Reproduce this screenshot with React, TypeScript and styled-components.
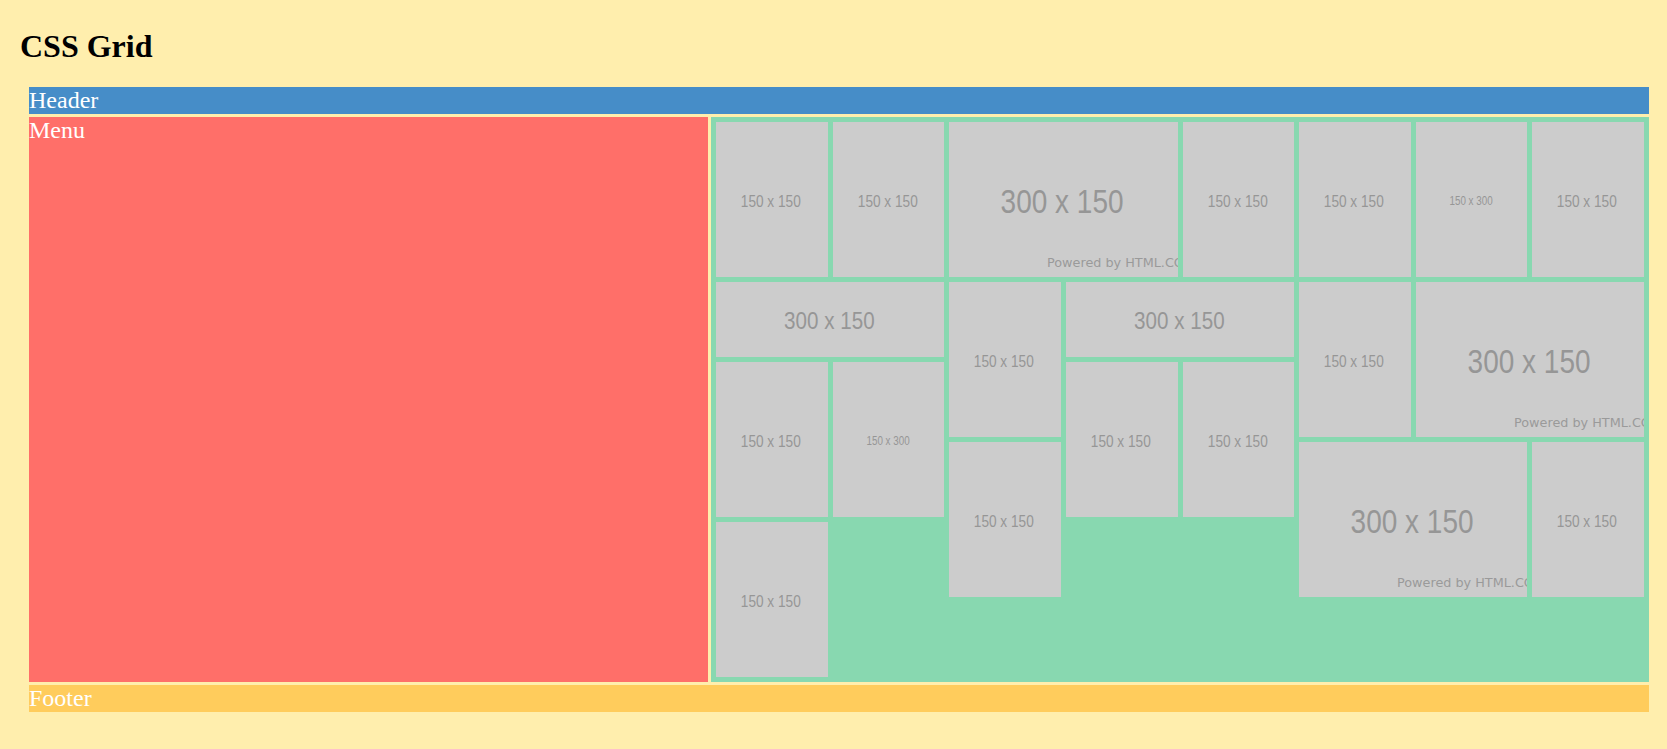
import styled, { createGlobalStyle } from 'styled-components';

const GlobalStyle = createGlobalStyle`
  html, body {
    margin: 0;
    padding: 0;
    background: #ffeead;
  }
`;

type Shot = {
  w: number;
  h: number;
  col: number;
  row: number;
  cols: number;
  rows: number;
};

// placeholder pictures, placed on the 8 column content grid
const shots: Shot[] = [
  { w: 150, h: 150, col: 1, row: 1, cols: 1, rows: 2 },
  { w: 150, h: 150, col: 2, row: 1, cols: 1, rows: 2 },
  { w: 300, h: 150, col: 3, row: 1, cols: 2, rows: 2 },
  { w: 150, h: 150, col: 5, row: 1, cols: 1, rows: 2 },
  { w: 150, h: 150, col: 6, row: 1, cols: 1, rows: 2 },
  { w: 150, h: 300, col: 7, row: 1, cols: 1, rows: 2 },
  { w: 150, h: 150, col: 8, row: 1, cols: 1, rows: 2 },
  { w: 300, h: 150, col: 1, row: 3, cols: 2, rows: 1 },
  { w: 150, h: 150, col: 3, row: 3, cols: 1, rows: 2 },
  { w: 300, h: 150, col: 4, row: 3, cols: 2, rows: 1 },
  { w: 150, h: 150, col: 6, row: 3, cols: 1, rows: 2 },
  { w: 300, h: 150, col: 7, row: 3, cols: 2, rows: 2 },
  { w: 150, h: 150, col: 1, row: 4, cols: 1, rows: 2 },
  { w: 150, h: 300, col: 2, row: 4, cols: 1, rows: 2 },
  { w: 150, h: 150, col: 4, row: 4, cols: 1, rows: 2 },
  { w: 150, h: 150, col: 5, row: 4, cols: 1, rows: 2 },
  { w: 150, h: 150, col: 3, row: 5, cols: 1, rows: 2 },
  { w: 300, h: 150, col: 6, row: 5, cols: 2, rows: 2 },
  { w: 150, h: 150, col: 8, row: 5, cols: 1, rows: 2 },
  { w: 150, h: 150, col: 1, row: 6, cols: 1, rows: 2 },
];

// behaves like an <img> with object-fit: cover
const Placeholder = ({ w, h, credit }: { w: number; h: number; credit: boolean }) => {
  const wide = w > 150;
  return (
    <Picture viewBox={`0 0 ${w} ${h}`} preserveAspectRatio="xMidYMid slice">
      <rect width={w} height={h} fill="#cccccc" />
      <Label
        x={w / 2 - 1}
        y={h / 2 + (wide ? 12.6 : 7.4)}
        $size={wide ? 32 : 16}
        textLength={wide ? 119 : 58}
        lengthAdjust="spacingAndGlyphs"
        textAnchor="middle"
      >
        {`${w} x ${h}`}
      </Label>
      {credit && (
        <Credit x={134.4} y={140}>
          Powered by HTML.COM
        </Credit>
      )}
    </Picture>
  );
};

export default function App() {
  return (
    <Page>
      <GlobalStyle />
      <Title>CSS Grid</Title>
      <Wrapper>
        <Header>Header</Header>
        <Menu>Menu</Menu>
        <Content>
          {shots.map((s, i) => (
            <Cell key={i} $col={s.col} $row={s.row} $cols={s.cols} $rows={s.rows}>
              <Placeholder w={s.w} h={s.h} credit={s.w > 150 && s.rows > 1} />
            </Cell>
          ))}
        </Content>
        <Footer>Footer</Footer>
      </Wrapper>
    </Page>
  );
}

const Page = styled.div`
  padding: 28px 18px 37px 20px;
  font-family: 'Liberation Serif', 'Times New Roman', serif;
`;

const Title = styled.h1`
  margin: 0 0 21.5px;
  font-size: 32px;
  font-weight: bold;
  color: #000;
`;

const Wrapper = styled.div`
  display: grid;
  grid-template-columns: 679px 1fr;
  gap: 3px;
  margin-left: 9px;
`;

const Header = styled.header`
  grid-column: 1 / -1;
  background: #468dc8;
  color: #fff;
  font-size: 24px;
  line-height: 27px;
`;

const Menu = styled.nav`
  background: #ff6f69;
  color: #fff;
  font-size: 24px;
  line-height: 27px;
`;

const Content = styled.main`
  display: grid;
  grid-template-columns: repeat(8, minmax(0, 1fr));
  grid-template-rows: repeat(7, 75px);
  gap: 5px;
  padding: 5px;
  background: #88d8b0;
`;

const Footer = styled.footer`
  grid-column: 1 / -1;
  background: #ffcc5c;
  color: #fff;
  font-size: 24px;
  line-height: 27px;
`;

const Cell = styled.div<{ $col: number; $row: number; $cols: number; $rows: number }>`
  grid-column: ${(p) => p.$col} / span ${(p) => p.$cols};
  grid-row: ${(p) => p.$row} / span ${(p) => p.$rows};
  overflow: hidden;
  background: #cccccc;
`;

const Picture = styled.svg`
  display: block;
  width: 100%;
  height: 100%;
`;

const Label = styled.text<{ $size: number }>`
  font-family: 'Liberation Sans', Arial, sans-serif;
  font-size: ${(p) => p.$size}px;
  fill: #969696;
`;

const Credit = styled.text`
  font-family: 'DejaVu Sans', Verdana, sans-serif;
  font-size: 12.4px;
  fill: #9a9a9a;
`;
